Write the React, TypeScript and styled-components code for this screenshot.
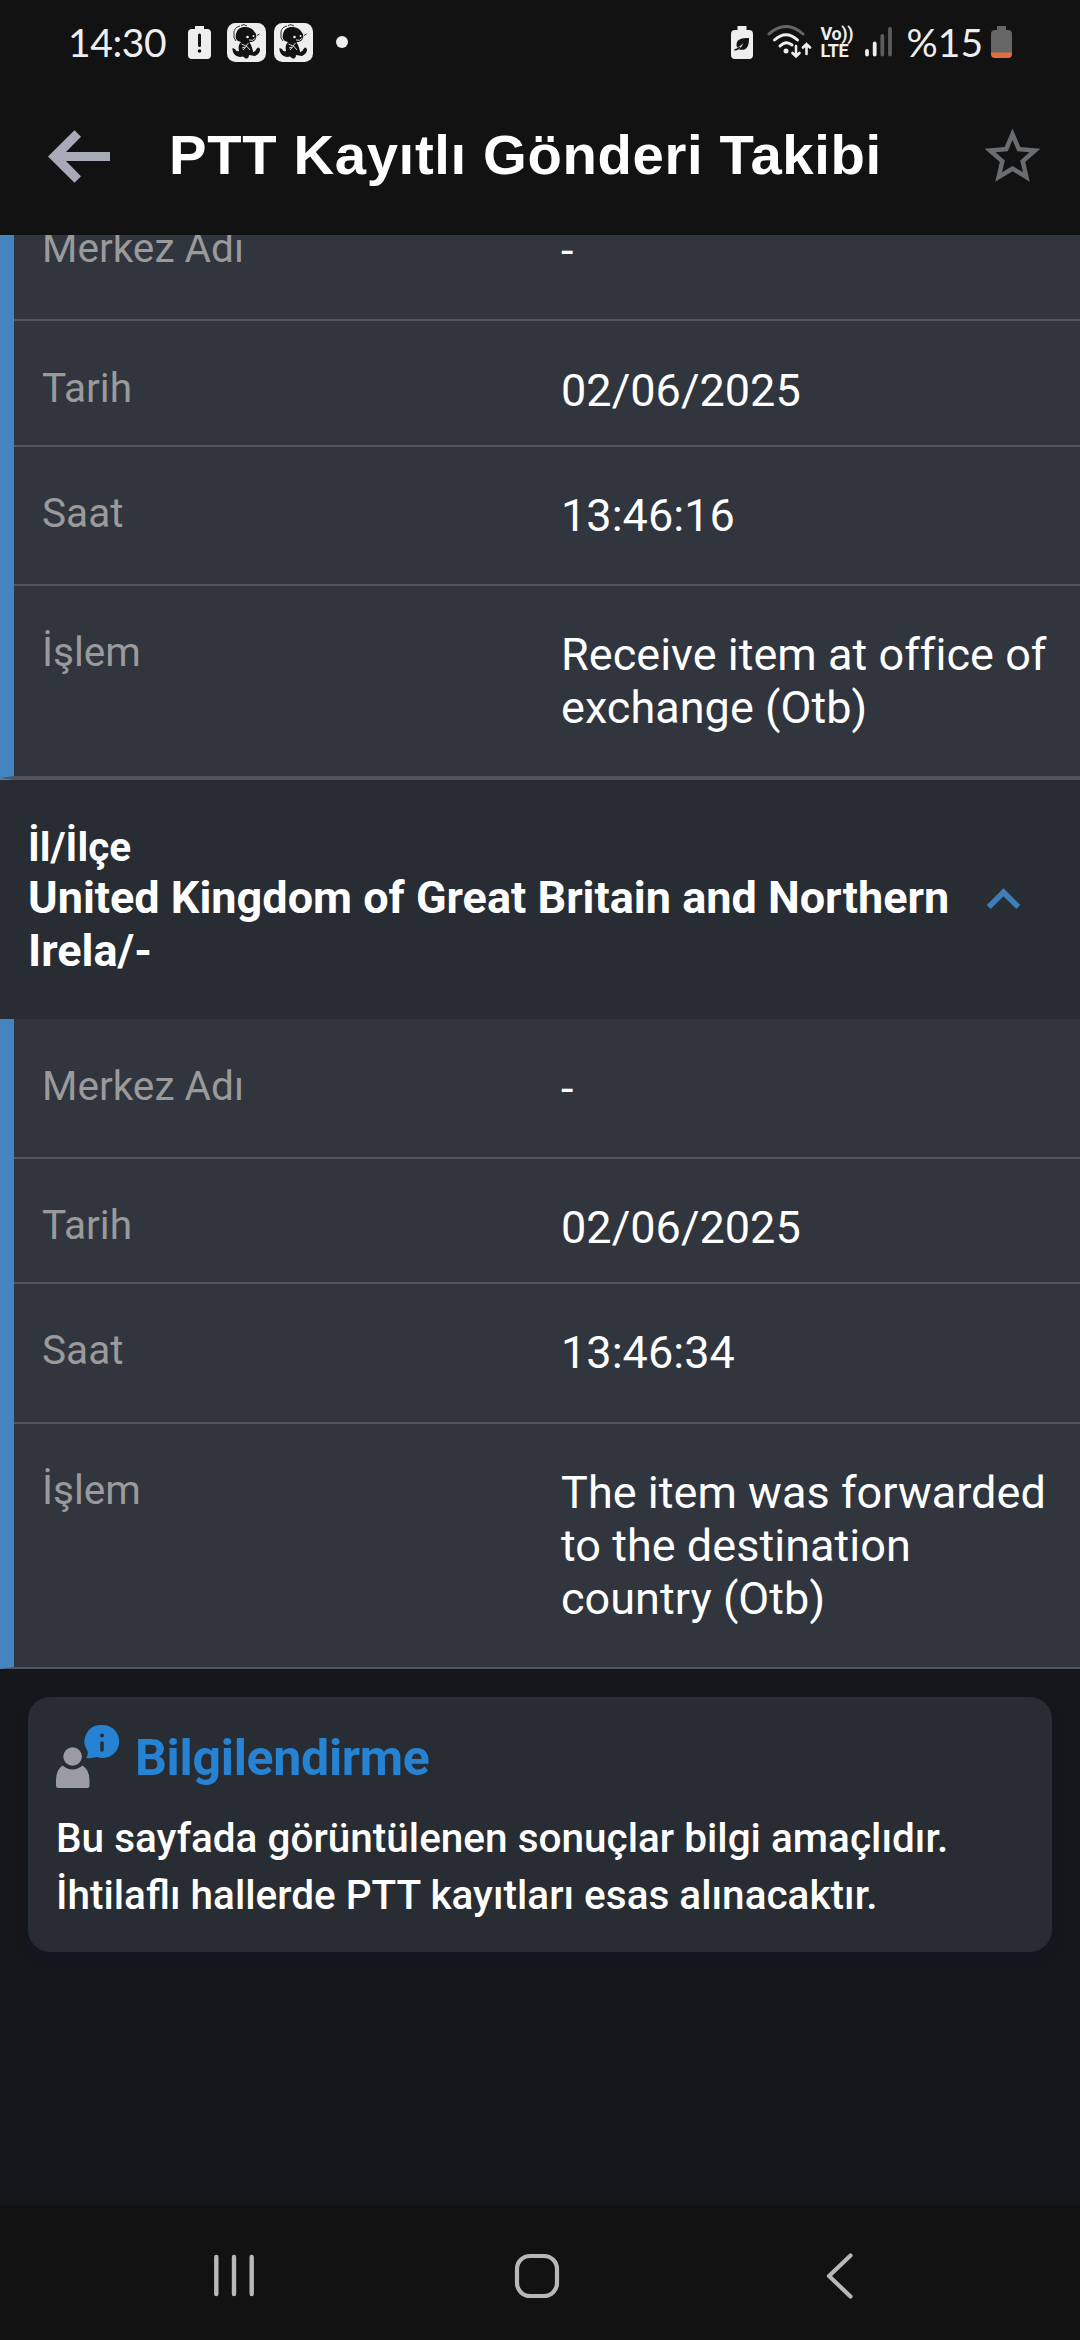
import styled, { createGlobalStyle } from 'styled-components'

interface Item {
    label: string;
    value: string;
    top: number;
    bottom: number;
}

const firstItems: Item[] = [
    { label: 'Merkez Adı', value: '-', top: 43, bottom: 42 },
    { label: 'Tarih', value: '02/06/2025', top: 43, bottom: 28 },
    { label: 'Saat', value: '13:46:16', top: 42, bottom: 42 },
    { label: 'İşlem', value: 'Receive item at office of exchange (Otb)', top: 42, bottom: 42 },
]

const secondItems: Item[] = [
    { label: 'Merkez Adı', value: '-', top: 43, bottom: 42 },
    { label: 'Tarih', value: '02/06/2025', top: 42, bottom: 28 },
    { label: 'Saat', value: '13:46:34', top: 42, bottom: 43 },
    { label: 'İşlem', value: 'The item was forwarded to the destination country (Otb)', top: 42, bottom: 42 },
]

const Dino = () => (
    <svg width="39" height="39" viewBox="0 0 39 39">
        <rect width="39" height="39" rx="8.5" fill="#eeeeee" />
        <path d="M9 11C10 6 14 3.500 19 4C23 4.500 26 6 27.500 9C30 11 30 16 27 18C25.500 19 23.500 19 22.500 19L24 22C25 25 26 27 26 29C29 29 29 25 31.500 24.500C34.500 26 33 31 28 33L22 32C22 35 20 36 18.500 35.500L16 33.500C11 35 5 32 5.500 25L8 26C9 28 10 28.500 12 28C11 24 12 21 14 19C9 18 8 15 9 11Z" fill="#121212" />
        <path d="M13 3C8 4 6.500 8 7 11Q6 15 9 18M14 2.500Q17 0.500 20 3M30 12.500L32.500 11" stroke="#121212" strokeWidth="0.900" fill="none" />
        <circle cx="20.500" cy="14" r="1.300" fill="#eeeeee" />
        <circle cx="26.500" cy="13" r="1" fill="#eeeeee" />
        <path d="M22 17Q26 18.500 28.500 15M14.500 21L19 23L21.500 20M16 27L19.500 23L23 27M15 25L18 24" stroke="#eeeeee" strokeWidth="0.900" fill="none" />
    </svg>
)

const Row = ({ label, value, top, bottom }: Item) => (
    <RowDiv $top={top} $bottom={bottom}>
        <Label>{label}</Label>
        <Value>{value}</Value>
    </RowDiv>
)

export default function App() {
    return (
        <Screen>
            <GlobalStyle />
            <StatusBar>
                <Clock>14:30</Clock>
                <StatusLeft>
                    <svg width="23" height="33" viewBox="0 0 23 33">
                        <path d="M7 0H16V3H19Q23 3 23 7V29Q23 33 19 33H4Q0 33 0 29V7Q0 3 4 3H7Z" fill="#eeeeee" />
                        <path d="M11.5 9V19.5" stroke="#121212" strokeWidth="3" strokeLinecap="round" />
                        <circle cx="11.5" cy="25" r="1.8" fill="#121212" />
                    </svg>
                    <Dino />
                    <Dino />
                    <Dot />
                </StatusLeft>
                <StatusRight>
                    <svg width="22" height="33" viewBox="0 0 22 33">
                        <path d="M6.5 0H15.5V4H18Q22 4 22 8V29Q22 33 18 33H4Q0 33 0 29V8Q0 4 4 4H6.5Z" fill="#eeeeee" />
                        <path d="M18 12C11 12 5.500 13 5.500 18.500Q5.500 20 6 21.500Q10 20 12.500 17Q11 21 7.500 23.500C15 25 18 22 18 12Z" fill="#121212" />
                        <path d="M3.500 24Q7 23.500 9 21" stroke="#121212" strokeWidth="1.400" fill="none" />
                    </svg>
                    <svg width="46" height="34" viewBox="0 0 46 34">
                        <g fill="none" strokeLinecap="round" strokeWidth="3">
                            <path d="M2 9Q19 -6 36 9" stroke="#666666" />
                            <path d="M7.500 15Q19 4.500 30.500 15" stroke="#eeeeee" />
                            <path d="M13 21Q19 15 25 20" stroke="#eeeeee" />
                            <path d="M29 21V31M25.500 28L29 31.500L32.500 28M39.500 29V19M36 22.500L39.500 19L43 22.500" stroke="#eeeeee" strokeWidth="2.600" />
                        </g>
                        <circle cx="19" cy="26" r="2.500" fill="#eeeeee" />
                    </svg>
                    <Volte>
                        <span>Vo))</span>
                        <span>LTE</span>
                    </Volte>
                    <svg width="28" height="30" viewBox="0 0 28 30">
                        <g strokeWidth="3.800" strokeLinecap="round">
                            <path d="M2 24V27.500M9.700 16.500V27.500" stroke="#eeeeee" />
                            <path d="M17.300 9V27.500M25 2V27.500" stroke="#5c5c5c" />
                        </g>
                    </svg>
                    <Percent>%15</Percent>
                    <svg width="21" height="32" viewBox="0 0 21 32">
                        <path d="M6 0H15V4H17Q21 4 21 8V27H0V8Q0 4 4 4H6Z" fill="#666666" />
                        <path d="M0 26.500H21V28Q21 32 17 32H4Q0 32 0 28Z" fill="#e66b3e" />
                    </svg>
                </StatusRight>
            </StatusBar>

            <Header>
                <svg width="62" height="53" viewBox="0 0 62 53">
                    <path d="M0 26.500L26.500 0.300L33 6.800L18 22H62V31H18L33 46.200L26.500 52.700Z" fill="#a9aab8" />
                </svg>
                <Title>PTT Kayıtlı Gönderi Takibi</Title>
                <svg width="67" height="67" viewBox="0 0 24 24">
                    <path d="M22 9.240l-7.190-.620L12 2 9.190 8.630 2 9.240l5.460 4.730L5.820 21 12 17.270 18.180 21l-1.630-7.030L22 9.240zM12 15.400l-3.760 2.270 1-4.280-3.320-2.880 4.380-.380L12 6.100l1.710 4.040 4.380.380-3.320 2.880 1 4.280L12 15.400z" fill="#6a6d70" />
                </svg>
            </Header>

            <Content>
                <Scrolled>
                    <Group>
                        {firstItems.map(item => <Row key={item.label} {...item} />)}
                    </Group>
                    <GroupEnd />
                    <SectionHead>
                        <SectionText>
                            <Caption>İl/İlçe</Caption>
                            <Place>United Kingdom of Great Britain and Northern Irela/-</Place>
                        </SectionText>
                        <svg width="67" height="67" viewBox="0 0 24 24">
                            <path d="M7.410 15.410L12 10.830l4.590 4.580L18 14l-6-6-6 6z" fill="#3f7fb8" />
                        </svg>
                    </SectionHead>
                    <Group>
                        {secondItems.map(item => <Row key={item.label} {...item} />)}
                    </Group>
                    <Card>
                        <CardHead>
                            <svg width="64" height="64" viewBox="0 0 64 64">
                                <circle cx="16.600" cy="32.500" r="9.300" fill="#9c9aa2" />
                                <path d="M6.500 41.500Q16.500 49.500 26.500 41.500Q33.500 46 33.500 56V62Q33.500 64 31.500 64H2Q0 64 0 62V56Q0 46 6.500 41.500Z" fill="#9c9aa2" />
                                <path d="M46.500 1A16.500 16.500 0 1 1 41 33Q35.500 34.500 30 34Q32.500 31 31.500 27A16.500 16.500 0 0 1 46.500 1Z" fill="#2682d3" />
                                <circle cx="46" cy="11.600" r="2" fill="#282c33" />
                                <path d="M46 19V26" stroke="#282c33" strokeWidth="3.600" strokeLinecap="round" />
                            </svg>
                            <CardTitle>Bilgilendirme</CardTitle>
                        </CardHead>
                        <CardText>
                            Bu sayfada görüntülenen sonuçlar bilgi amaçlıdır. İhtilaflı hallerde PTT kayıtları esas alınacaktır.
                        </CardText>
                    </Card>
                </Scrolled>
            </Content>

            <NavBar>
                <svg width="40" height="46" viewBox="0 0 40 46">
                    <path d="M2.300 4V41M20 4V41M37.700 4V41" stroke="#b8b8b8" strokeWidth="4.400" strokeLinecap="round" />
                </svg>
                <HomeIcon width="46" height="46" viewBox="0 0 46 46">
                    <rect x="3" y="3" width="40" height="40" rx="13" fill="none" stroke="#b8b8b8" strokeWidth="4.200" />
                </HomeIcon>
                <svg width="27" height="46" viewBox="0 0 27 46">
                    <path d="M24.500 2.500L3 23L24.500 43.500" fill="none" stroke="#b8b8b8" strokeWidth="4.200" strokeLinecap="round" strokeLinejoin="round" />
                </svg>
            </NavBar>
        </Screen>
    )
}

const GlobalStyle = createGlobalStyle`
    * {
        box-sizing: border-box;
        margin: 0;
        padding: 0;
    }
    body {
        background-color: #16171b;
        font-family: Roboto, sans-serif;
    }
    svg {
        display: block;
        flex-shrink: 0;
    }
`

const Screen = styled.div`
    width: 1080px;
    height: 2340px;
    display: flex;
    flex-direction: column;
    overflow: hidden;
    background-color: #16171b;
`

const StatusBar = styled.div`
    height: 84px;
    display: flex;
    align-items: center;
    flex-shrink: 0;
    padding: 0 68px 0 68px;
    background-color: #121212;
    color: #eeeeee;
`

const Clock = styled.span`
    width: 120px;
    font-family: Lato, sans-serif;
    font-size: 39px;
    line-height: 40px;
    letter-spacing: -0.4px;
`

const StatusLeft = styled.div`
    display: flex;
    align-items: center;

    svg:first-child {
        margin-right: 16px;
    }
    svg + svg + svg {
        margin-left: 8px;
    }
`

const Dot = styled.i`
    width: 12px;
    height: 12px;
    margin-left: 23px;
    border-radius: 50%;
    background-color: #eeeeee;
`

const StatusRight = styled.div`
    display: flex;
    align-items: center;
    margin-left: auto;

    svg:first-child {
        margin-right: 14px;
    }
`

const Volte = styled.div`
    width: 34px;
    display: flex;
    flex-direction: column;
    margin: 0 10px 0 8px;
    font-family: Roboto, sans-serif;
    font-size: 18px;
    font-weight: 700;
    line-height: 17px;
    letter-spacing: -0.4px;
`

const Percent = styled.span`
    margin: 0 8px 0 14px;
    font-family: Lato, sans-serif;
    font-size: 39px;
    line-height: 40px;
`

const Header = styled.header`
    height: 151px;
    display: flex;
    align-items: center;
    flex-shrink: 0;
    padding: 0 34px 6px 48px;
    background-color: #121212;
`

const Title = styled.h1`
    flex: 1;
    margin-left: 59px;
    padding-bottom: 4px;
    color: #ffffff;
    font-family: 'Liberation Sans', sans-serif;
    font-size: 56.25px;
    font-weight: 700;
    letter-spacing: 0.65px;
    white-space: nowrap;
`

const Content = styled.main`
    flex: 1;
    min-height: 0;
    overflow: hidden;
`

/* the list is scrolled partly under the header */
const Scrolled = styled.div`
    display: flow-root;
    margin-top: -54px;
`

const Group = styled.div`
    border-left: 14px solid #4484bf;
    border-bottom: 2px solid #505561;
    background-color: #31353e;
`

const GroupEnd = styled.div`
    height: 2px;
    border-left: 14px solid #4484bf;
    border-top: 2px solid #505561;
`

const RowDiv = styled.div<{ $top: number; $bottom: number }>`
    display: grid;
    grid-template-columns: 519px 1fr;
    padding: ${({ $top, $bottom }) => `${$top}px 28px ${$bottom}px 28px`};

    & + & {
        border-top: 2px solid #505561;
    }
`

const Label = styled.span`
    color: #9a9a9a;
    font-size: 40.6px;
    line-height: 48px;
`

const Value = styled.span`
    color: #ffffff;
    font-size: 45px;
    line-height: 53px;
    letter-spacing: 0.03px;
    margin-right: -10px;
`

const SectionHead = styled.div`
    height: 239px;
    display: flex;
    align-items: center;
    padding: 0 43px 0 28px;
    background-color: #282c33;
`

const SectionText = styled.div`
    flex: 1;
    padding-top: 1px;
    color: #ffffff;
    font-weight: 700;
`

const Caption = styled.p`
    font-size: 40.5px;
    line-height: 48px;
`

const Place = styled.p`
    font-size: 45px;
    line-height: 53px;
`

const Card = styled.section`
    height: 255px;
    margin: 28px 28px 0;
    padding: 27px 28px;
    border-radius: 22px;
    background-color: #282c33;
    box-shadow: 0 8px 10px #141723;
`

const CardHead = styled.div`
    height: 64px;
    display: flex;
    align-items: center;
`

const CardTitle = styled.h2`
    margin-left: 15px;
    padding-top: 3px;
    color: #2682d3;
    font-size: 50px;
    font-weight: 700;
    line-height: 60px;
    letter-spacing: -0.3px;
`

const CardText = styled.p`
    margin-top: 22px;
    color: #ffffff;
    font-size: 40.5px;
    font-weight: 500;
    line-height: 57px;
`

const NavBar = styled.nav`
    height: 135px;
    display: flex;
    align-items: center;
    justify-content: space-between;
    flex-shrink: 0;
    padding: 7px 227px 0 214px;
    background-color: #121212;
`

const HomeIcon = styled.svg`
    margin-right: 7px;
`
